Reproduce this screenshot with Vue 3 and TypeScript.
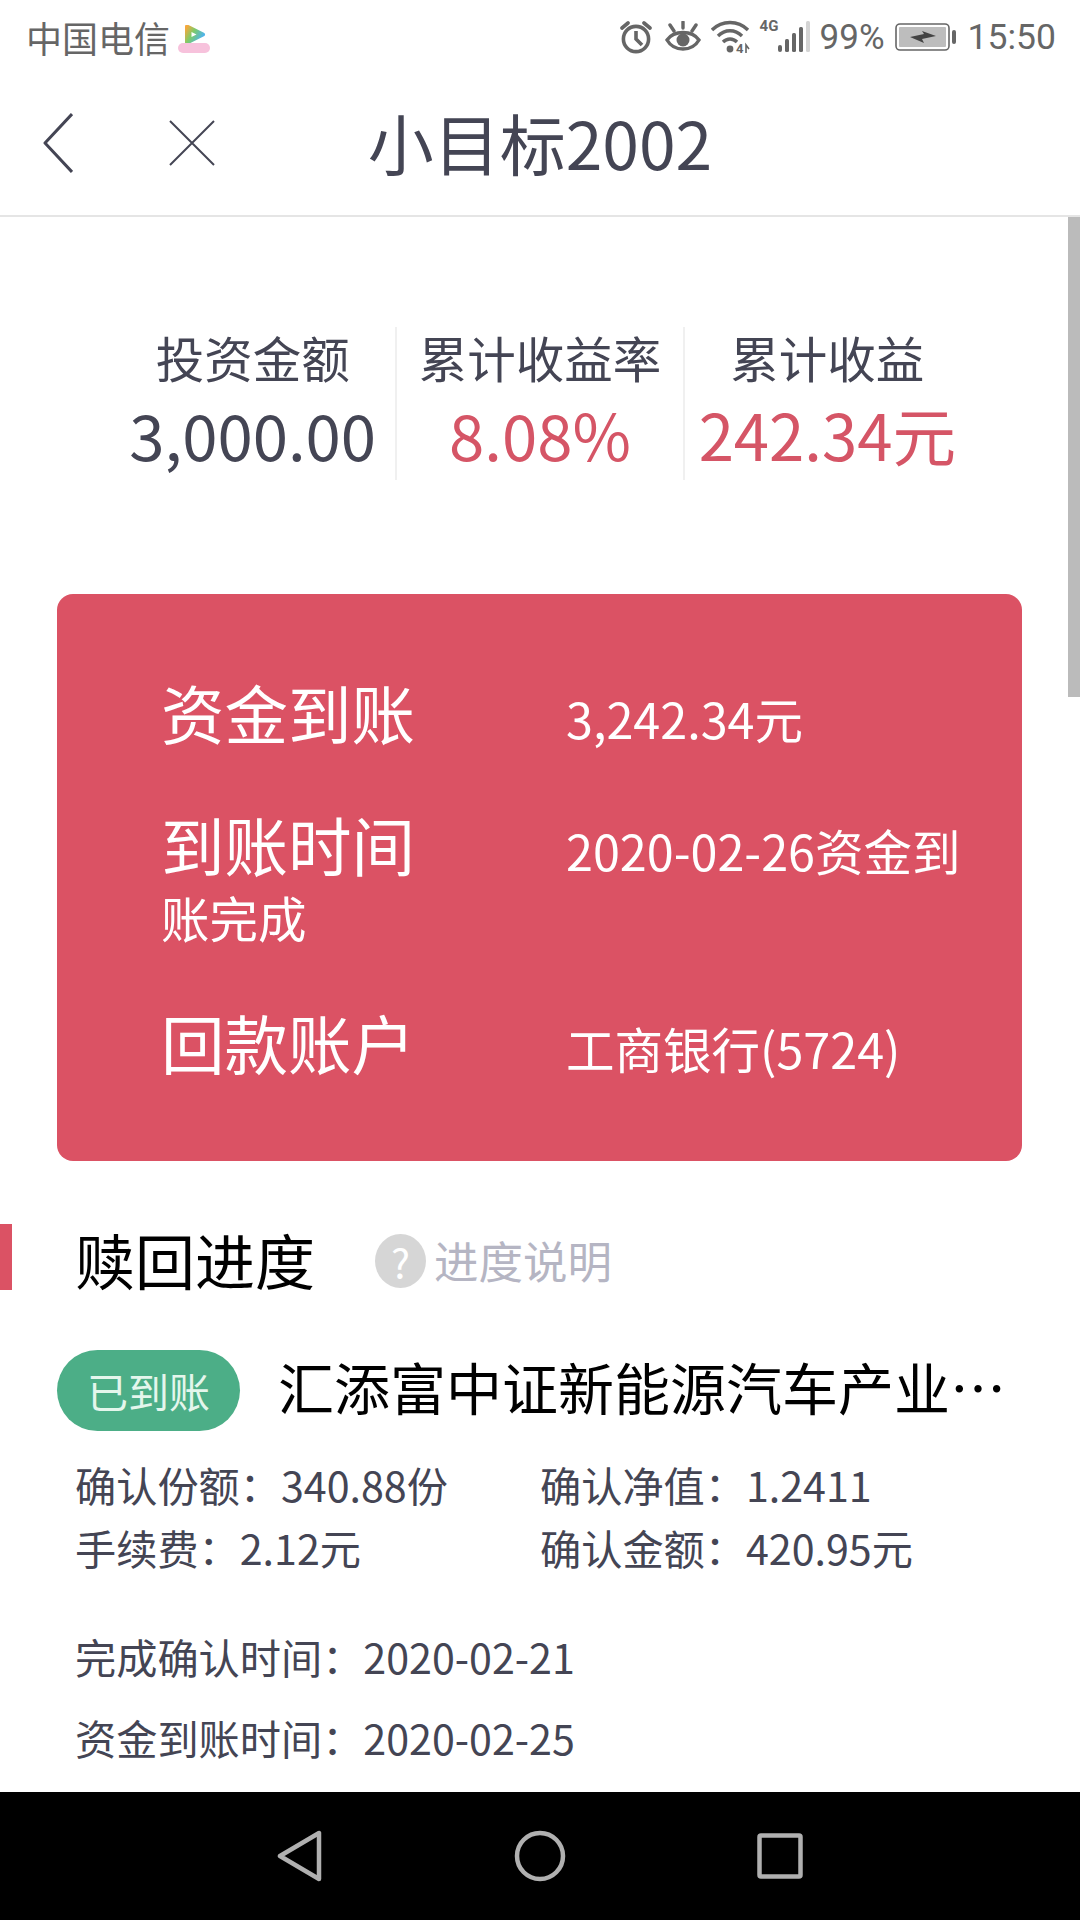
<script setup lang="ts">
const stats = [
  { label: '投资金额', value: '3,000.00', red: false },
  { label: '累计收益率', value: '8.08%', red: true },
  { label: '累计收益', value: '242.34元', red: true },
]

const payout = [
  { label: '资金到账', value: '3,242.34元' },
  { label: '到账时间', value: '2020-02-26资金到账完成' },
  { label: '回款账户', value: '工商银行(5724)' },
]

const pairs = [
  ['确认份额：340.88份', '确认净值：1.2411'],
  ['手续费：2.12元', '确认金额：420.95元'],
]
</script>

<template>
  <div class="page">
    <div class="statusbar">
      <div class="carrier">
        <span>中国电信</span>
        <svg class="video-icon" width="32" height="28" viewBox="0 0 32 28">
          <defs>
            <linearGradient id="tri" x1="0" y1="0" x2="1" y2="0.6">
              <stop offset="0" stop-color="#f5a83c" />
              <stop offset="0.45" stop-color="#7ccb6a" />
              <stop offset="1" stop-color="#4fb4ea" />
            </linearGradient>
          </defs>
          <path d="M9 1.5 L25 9.5 L9 17.5 Z" fill="url(#tri)" stroke="url(#tri)" stroke-width="4" stroke-linejoin="round" />
          <path d="M13.5 7 L18.5 9.5 L13.5 12 Z" fill="#fff" />
          <rect x="0" y="18" width="32" height="10" rx="5" fill="#f7c2dc" />
        </svg>
      </div>
      <div class="sys">
        <svg class="i-alarm" width="32" height="34" viewBox="0 0 32 34" fill="none" stroke="#666" stroke-width="3.6">
          <circle cx="16" cy="19" r="12.6" />
          <path d="M16 11v8l6 6" />
          <path d="M2 8 L8 3 M30 8 L24 3" stroke-linecap="round" />
        </svg>
        <svg class="i-eye" width="36" height="32" viewBox="0 0 36 32" fill="none" stroke="#666" stroke-width="3.4">
          <path d="M2 19 C9 9 27 9 34 19 C27 31 9 31 2 19 Z" />
          <circle cx="18" cy="19" r="6.5" fill="#666" stroke="none" />
          <path d="M18 1v6M5 4l4 6M31 4l-4 6" stroke-linecap="round" />
        </svg>
        <svg class="i-wifi" width="40" height="36" viewBox="0 0 40 36" fill="none" stroke="#666" stroke-width="3.4">
          <path d="M1 10 C11 0 27 0 37 10" />
          <path d="M7 16 C14 9 24 9 31 16" />
          <path d="M12 22 C16 18 22 18 26 22" />
          <circle cx="19" cy="29" r="3.4" fill="#666" stroke="none" />
          <text x="25" y="33" class="wifi-tag">4</text>
          <path d="M35 33v-8l3 4" stroke-width="1.6" />
        </svg>
        <div class="signal">
          <span class="net">4G</span>
          <svg width="34" height="32" viewBox="0 0 34 32" fill="#666">
            <rect x="0" y="24" width="4" height="7" rx="2" />
            <rect x="7" y="18" width="4" height="13" rx="1.5" />
            <rect x="14" y="12" width="4" height="19" rx="1.5" />
            <rect x="21" y="6" width="4" height="25" rx="1.5" />
            <rect x="28" y="0" width="4" height="31" rx="1.5" fill="#d4d4d4" />
          </svg>
        </div>
        <span class="pct">99%</span>
        <svg class="i-batt" width="62" height="28" viewBox="0 0 62 28">
          <rect x="1" y="1" width="53" height="26" rx="4" fill="#fff" stroke="#666" stroke-width="1.6" />
          <rect x="4" y="4" width="47" height="20" rx="1" fill="#bdbdbd" />
          <path d="M15 14 L29 11 L27 8 L41 13 L27 16 L29 20 Z" fill="#444" />
          <rect x="57" y="7" width="4" height="14" rx="2" fill="#666" />
        </svg>
        <span class="clock">15:50</span>
      </div>
    </div>

    <header class="topbar">
      <div class="nav-btns">
        <svg width="30" height="60" viewBox="0 0 30 60" fill="none" stroke="#444554" stroke-width="3">
          <path d="M29 1 L2 30 L29 59" stroke-linejoin="round" />
        </svg>
        <svg width="46" height="46" viewBox="0 0 46 46" fill="none" stroke="#444554" stroke-width="2">
          <path d="M1 1 L45 45 M45 1 L1 45" />
        </svg>
      </div>
      <h1 class="title">小目标2002</h1>
      <div></div>
    </header>

    <main class="content">
      <div class="scrollbar"></div>

      <section class="stats">
        <div v-for="s in stats" :key="s.label" class="stat">
          <div class="stat-label">{{ s.label }}</div>
          <div class="stat-value" :class="{ red: s.red }">{{ s.value }}</div>
        </div>
      </section>

      <section class="card">
        <p v-for="row in payout" :key="row.label" class="card-row">
          <span class="card-label">{{ row.label }}</span><span class="card-value">{{ row.value }}</span>
        </p>
      </section>

      <div class="section-head">
        <h2 class="section-title">赎回进度</h2>
        <span class="help-dot">?</span>
        <span class="help-text">进度说明</span>
      </div>

      <div class="fund-head">
        <span class="pill">已到账</span>
        <span class="fund-name">汇添富中证新能源汽车产业混合型证券投资基金</span>
      </div>

      <div class="pairs">
        <div v-for="p in pairs" :key="p[0]" class="pair">
          <span>{{ p[0] }}</span>
          <span>{{ p[1] }}</span>
        </div>
      </div>

      <div class="times">
        <div>完成确认时间：2020-02-21</div>
        <div>资金到账时间：2020-02-25</div>
      </div>
    </main>

    <footer class="navbar">
      <svg width="46" height="52" viewBox="0 0 46 52" fill="none" stroke="#b0b0b0" stroke-width="4.5" stroke-linejoin="round">
        <path d="M42 3 V49 L3 26 Z" />
      </svg>
      <svg width="52" height="52" viewBox="0 0 52 52" fill="none" stroke="#b0b0b0" stroke-width="4.5">
        <circle cx="26" cy="26" r="23" />
      </svg>
      <svg width="46" height="46" viewBox="0 0 46 46" fill="none" stroke="#b0b0b0" stroke-width="4.5" stroke-linejoin="round">
        <rect x="2.5" y="2.5" width="41" height="41" rx="1.5" />
      </svg>
    </footer>
  </div>
</template>

<style>
html,
body {
  margin: 0;
  background: #fff;
}
</style>

<style scoped>
.page {
  width: 1080px;
  height: 1920px;
  display: flex;
  flex-direction: column;
  overflow: hidden;
  background: #fff;
  color: #444554;
  font-family: "Noto Sans CJK SC", "Noto Sans", sans-serif;
}

.statusbar {
  height: 70px;
  flex: none;
  display: flex;
  justify-content: space-between;
  align-items: center;
  padding: 4px 24px 0 26px;
  box-sizing: border-box;
  color: #666;
}

.carrier {
  display: flex;
  align-items: center;
  gap: 8px;
  font-size: 36px;
}

.video-icon {
  margin-top: 4px;
}

.sys {
  display: flex;
  align-items: center;
  font-family: Roboto, "Noto Sans", sans-serif;
}

.i-eye {
  margin-left: 13px;
}

.i-wifi {
  margin: 2px 0 0 10px;
}

.wifi-tag {
  font-size: 13px;
  font-weight: 700;
  fill: #666;
  stroke: none;
}

.signal {
  position: relative;
  margin-left: 27px;
  width: 34px;
  display: flex;
}

.net {
  position: absolute;
  left: -18px;
  top: -4px;
  font-size: 15px;
  font-weight: 700;
}

.pct {
  margin-left: 8px;
  font-size: 35px;
}

.i-batt {
  margin-left: 10px;
}

.clock {
  margin-left: 11px;
  font-size: 35.5px;
}

.topbar {
  height: 147px;
  flex: none;
  display: grid;
  grid-template-columns: 1fr auto 1fr;
  align-items: center;
  border-bottom: 2px solid #e5e5e5;
  box-sizing: border-box;
}

.nav-btns {
  display: flex;
  align-items: center;
  gap: 96px;
  padding-left: 43px;
}

.title {
  margin: 0 0 4px;
  font-size: 66px;
  font-weight: 400;
  line-height: 80px;
}

.content {
  position: relative;
  flex: 1;
  min-height: 0;
  overflow: hidden;
}

.scrollbar {
  position: absolute;
  top: 0;
  right: 0;
  width: 12px;
  height: 480px;
  background: #bbb;
}

.stats {
  display: flex;
  padding: 110px 110px 0;
}

.stat {
  flex: 1;
  height: 153px;
  text-align: center;
  white-space: nowrap;
}

.stat + .stat {
  border-left: 2px solid #f0f0f0;
}

.stat-label {
  font-size: 48.5px;
  line-height: 60px;
}

.stat-value {
  margin-top: 6px;
  font-size: 63.5px;
  line-height: 80px;
}

.stat-value.red {
  color: #d55566;
}

.card {
  margin: 114px 58px 0 57px;
  height: 567px;
  padding: 72px 50px 0 104px;
  box-sizing: border-box;
  border-radius: 16px;
  background: #db5264;
  color: #fff;
}

.card-row {
  margin: 0 0 42px;
  font-size: 48.5px;
  line-height: 58px;
}

.card-row:last-child {
  margin-top: 50px;
}

.card-label {
  display: inline-block;
  width: 405px;
  font-size: 63.5px;
  line-height: 90px;
}

.section-head {
  margin-top: 63px;
  height: 66px;
  display: flex;
  align-items: center;
  border-left: 12px solid #db5264;
  padding-left: 63px;
}

.section-title {
  margin: 4px 0 0;
  font-size: 60px;
  font-weight: 400;
  line-height: 66px;
  color: #000;
}

.help-dot {
  margin: 8px 0 0 60px;
  width: 51px;
  height: 54px;
  border-radius: 50%;
  background: #d6d6d6;
  color: #fff;
  font-size: 40px;
  line-height: 54px;
  text-align: center;
}

.help-text {
  margin: 4px 0 0 8px;
  font-size: 44.5px;
  color: #b5b5c3;
}

.fund-head {
  margin-top: 60px;
  padding: 0 72px 0 57px;
  display: flex;
  align-items: center;
  gap: 38px;
}

.pill {
  flex: none;
  width: 183px;
  height: 81px;
  border-radius: 41px;
  background: #4cae87;
  color: #e4f6ec;
  font-size: 41px;
  line-height: 81px;
  text-align: center;
}

.fund-name {
  flex: 1;
  min-width: 0;
  padding-bottom: 10px;
  font-size: 56px;
  line-height: 70px;
  color: #000;
  white-space: nowrap;
  overflow: hidden;
  text-overflow: ellipsis;
}

.pairs {
  margin-top: 22px;
  padding-left: 75px;
  font-size: 41.2px;
  line-height: 63px;
}

.pair {
  display: grid;
  grid-template-columns: 465px auto;
  justify-content: start;
}

.times {
  margin-top: 47px;
  padding-left: 75px;
  font-size: 41.2px;
  line-height: 60px;
  display: flex;
  flex-direction: column;
  gap: 21px;
}

.navbar {
  height: 128px;
  flex: none;
  background: #000;
  display: grid;
  grid-template-columns: 46px 52px 46px;
  justify-content: center;
  column-gap: 191px;
  align-items: center;
}
</style>
